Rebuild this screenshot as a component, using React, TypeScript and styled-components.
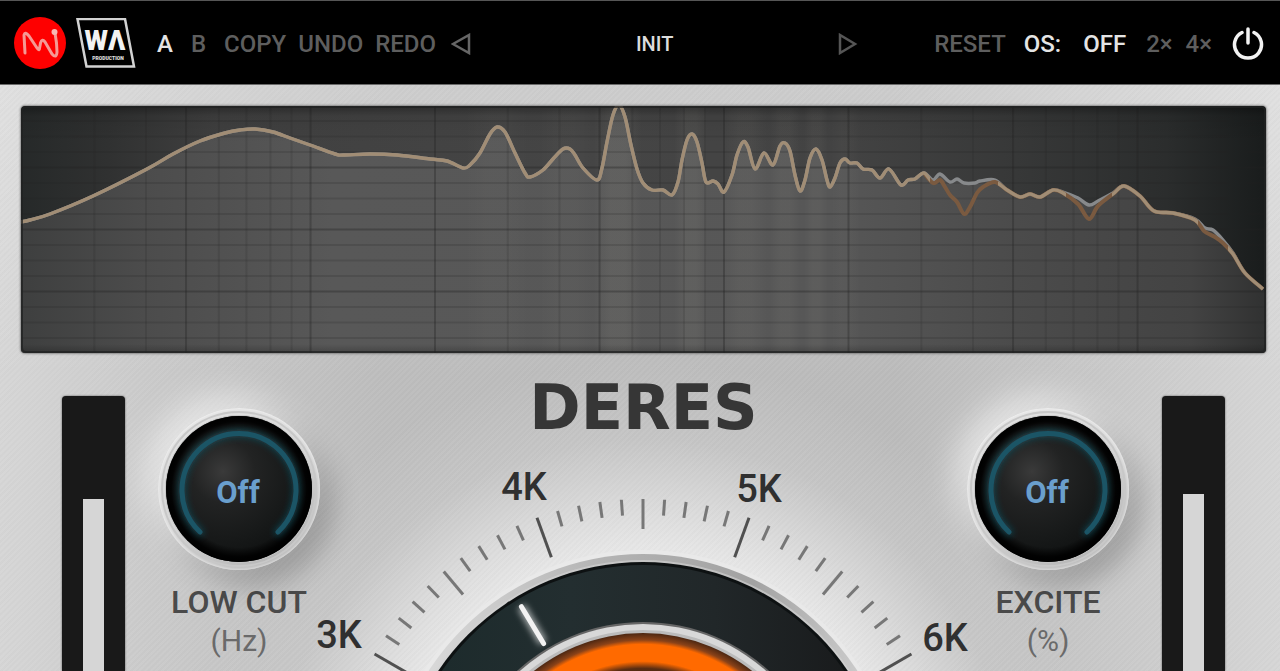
import React from "react";
import styled, { createGlobalStyle } from "styled-components";

const GlobalStyle = createGlobalStyle`
  * { box-sizing: border-box; }
  body { margin: 0; background: #c6c6c6; }
  button { font: inherit; border: 0; padding: 0; background: none; cursor: pointer; }
`;

const Plugin = styled.div`
  display: flex;
  flex-direction: column;
  height: 100vh;
  overflow: hidden;
  font-family: Roboto, "Liberation Sans", sans-serif;
  background:
    repeating-linear-gradient(135deg, rgba(255, 255, 255, 0.03) 0 2px, rgba(0, 0, 0, 0.01) 2px 4px),
    radial-gradient(circle at calc(50% + 3px) 809px, #e6e6e6 0 262px, rgba(218, 218, 218, 0.95) 310px, rgba(203, 203, 203, 0.6) 370px, rgba(190, 190, 190, 0) 450px),
    linear-gradient(to bottom, rgba(255, 255, 255, 0.25) 85px, rgba(255, 255, 255, 0) 380px),
    linear-gradient(to right, #d6d6d6 0%, #cacaca 12%, #bdbdbd 30%, #bbbbbb 70%, #cacaca 88%, #d6d6d6 100%);
`;

const Header = styled.header`
  display: flex;
  align-items: center;
  flex: none;
  height: 85px;
  padding: 2px 16px 0 14px;
  background: #000;
  border-top: 1px solid #565656;
  border-bottom: 1px solid #6a6a6a;
  font-size: 24px;
  line-height: 28px;
`;

const Brand = styled.div`
  display: flex;
  align-items: center;
  gap: 10px;
  margin-right: 21px;
  svg { display: block; }
`;

const Group = styled.div<{ $gap: number; $after: number }>`
  display: flex;
  align-items: center;
  gap: ${(p) => p.$gap}px;
  margin-right: ${(p) => p.$after}px;
`;

const BarButton = styled.button<{ $active?: boolean }>`
  color: ${(p) => (p.$active ? "#e4e4e4" : "#5e5e5e")};
  font-weight: 500;
`;

const BarText = styled.span`
  color: #e4e4e4;
  font-weight: 500;
`;

const PresetNav = styled.nav`
  display: flex;
  flex: 1;
  align-items: center;
  justify-content: space-between;
  margin-right: 76px;
`;

const PresetName = styled.button`
  color: #dcdcdc;
  font-size: 20px;
  font-weight: 500;
`;

const IconButton = styled.button`
  display: block;
  svg { display: block; }
`;

const Display = styled.section`
  flex: none;
  margin: 21px 14px 0 21px;
  border-radius: 4px;
  overflow: hidden;
  box-shadow: 0 0 2px 1px rgba(90, 90, 90, 0.6);
  svg { display: block; width: 100%; height: auto; }
`;

const Controls = styled.main`
  display: flex;
  flex: 1;
  align-items: stretch;
  gap: 33px;
  min-height: 0;
  padding: 1px 55px 0 62px;
`;

const MeterTrack = styled.div<{ $top: number }>`
  flex: none;
  display: flex;
  justify-content: center;
  width: 63px;
  margin-top: 42px;
  padding-top: ${(p) => p.$top}px;
  background: #191919;
  border-radius: 4px 4px 0 0;
  box-shadow: 0 0 2px rgba(40, 40, 40, 0.8);
  position: relative;
  z-index: 1;
`;

const MeterLevel = styled.div`
  width: 21px;
  background: #d6d6d6;
`;

const KnobColumn = styled.div`
  flex: none;
  display: flex;
  flex-direction: column;
  align-items: center;
  width: 162px;
  padding-top: 54px;
`;

const KnobBody = styled.div`
  position: relative;
  flex: none;
  width: 162px;
  height: 162px;
  border-radius: 50%;
  background: linear-gradient(150deg, #e2e2e2 10%, #d6d6d6 50%, #b4b4b4 90%);
  box-shadow:
    -12px -12px 34px rgba(245, 245, 245, 0.7),
    12px 14px 28px rgba(0, 0, 0, 0.24),
    inset 0 0 4px rgba(255, 255, 255, 0.9);
  svg { display: block; }
`;

const KnobInput = styled.input`
  position: absolute;
  inset: 0;
  width: 100%;
  height: 100%;
  margin: 0;
  opacity: 0;
  cursor: grab;
`;

const KnobLabel = styled.label`
  margin-top: 12px;
  font-size: 32px;
  line-height: 40px;
  font-weight: 500;
  color: #4a4a4a;
  white-space: nowrap;
`;

const KnobUnit = styled.span`
  font-size: 30px;
  line-height: 38px;
  color: #6a6a6a;
`;

const Center = styled.div`
  flex: 1;
  min-width: 0;
  display: flex;
  flex-direction: column;
  align-items: center;
  svg { display: block; flex: none; width: 100%; height: auto; overflow: visible; }
`;

const Title = styled.h1`
  margin: 18px 0 0;
  height: 68px;
  font-family: "DejaVu Sans", sans-serif;
  font-size: 62px;
  line-height: 72px;
  font-weight: 700;
  color: #363636;
`;

type Point = [number, number];

const head: Point[] = [
  [20, 222], [30, 220], [50, 214], [93, 196], [147, 169], [173, 154], [200, 141], [225, 133], [240, 130],
  [255, 129], [273, 132], [290, 138], [310, 145], [335, 154], [343, 155], [370, 154], [397, 155], [430, 159],
  [447, 161], [463, 168], [470, 165], [480, 153], [490, 134], [497, 127], [505, 132], [515, 153], [525, 173],
  [530, 177], [543, 170], [553, 159], [563, 149], [570, 149], [575, 155], [583, 168], [597, 180], [602, 168],
  [607, 142], [613, 115], [619, 105], [625, 117], [631, 145], [637, 169], [643, 183], [652, 190], [663, 190],
  [672, 195], [678, 182], [682, 160], [687, 140], [692, 134], [697, 142], [702, 163], [706, 182], [713, 181],
  [718, 184], [724, 192], [732, 175], [737, 155], [743, 142], [748, 147], [755, 169], [764, 153], [773, 165],
  [780, 146], [785, 143], [790, 151], [795, 175], [800, 191], [805, 180], [810, 158], [816, 149], [822, 160],
  [827, 180], [830, 187], [835, 178], [840, 163], [845, 159], [850, 163], [857, 163], [863, 169], [872, 170],
  [880, 178], [889, 169], [901, 185], [908, 180], [915, 179], [924, 173],
];

const inputTail: Point[] = [
  [933, 180], [940, 174], [950, 182], [957, 179], [964, 183], [975, 183], [980, 181], [995, 180], [1007, 190],
  [1020, 197], [1030, 194], [1040, 197], [1053, 190], [1063, 192], [1078, 198], [1089, 205], [1098, 201],
  [1113, 193], [1124, 186], [1140, 196], [1154, 211], [1173, 213], [1195, 219], [1205, 228], [1213, 230],
  [1223, 240], [1233, 253], [1245, 273], [1263, 289],
];

const outputTail: Point[] = [
  [933, 183], [940, 180], [945, 187], [950, 195], [957, 202], [964, 214], [970, 207], [977, 193], [983, 187],
  [995, 182], [1007, 190], [1020, 197], [1030, 194], [1040, 197], [1053, 190], [1063, 193], [1078, 204],
  [1089, 219], [1098, 206], [1113, 194], [1124, 186], [1140, 196], [1154, 211], [1173, 213], [1195, 220],
  [1204, 231], [1215, 237], [1223, 243], [1233, 254], [1245, 273], [1263, 289],
];

// Catmull-Rom spline through the measured magnitudes.
function smooth(points: Point[]): string {
  let d = `M${points[0][0]} ${points[0][1]}`;
  for (let i = 0; i < points.length - 1; i++) {
    const a = points[Math.max(0, i - 1)];
    const b = points[i];
    const c = points[i + 1];
    const e = points[Math.min(points.length - 1, i + 2)];
    d += `C${b[0] + (c[0] - a[0]) / 6} ${b[1] + (c[1] - a[1]) / 6} ${c[0] - (e[0] - b[0]) / 6} ${c[1] - (e[1] - b[1]) / 6} ${c[0]} ${c[1]}`;
  }
  return d;
}

const inputPath = smooth([...head, ...inputTail]);
const outputPath = smooth([...head, ...outputTail]);
const areaPath = `${inputPath}L1266 292V354H20Z`;

// 20 Hz sits on the left edge; one decade is 413.5 units wide.
const frequencies = [30, 40, 50, 60, 70, 80, 90, 100, 200, 300, 400, 500, 600, 700, 800, 900, 1000, 2000, 3000, 4000, 5000, 6000, 7000, 8000, 9000, 10000];
const strongFrequencies = [50, 100, 200, 500, 1000, 2000, 5000, 10000];
const frequencyX = (f: number) => 21.5 + 413.5 * Math.log10(f / 20);

// Peaks light up the columns beneath them: [centre, width, opacity].
const streaks = [
  [497, 64, 0.02], [566, 54, 0.02], [618, 48, 0.055], [691, 34, 0.05], [745, 44, 0.035],
  [785, 30, 0.035], [816, 24, 0.035], [846, 30, 0.02],
];

function Analyzer() {
  return (
    <Display aria-label="Spectrum">
      <svg viewBox="21 106 1245 247" role="img" aria-label="Spectrum analyzer">
        <defs>
          <linearGradient id="screen" x1="0" x2="1" y1="0" y2="0">
            <stop offset="0" stopColor="#262929" />
            <stop offset="0.07" stopColor="#303131" />
            <stop offset="0.16" stopColor="#404040" />
            <stop offset="0.45" stopColor="#454545" />
            <stop offset="0.66" stopColor="#434343" />
            <stop offset="0.8" stopColor="#373838" />
            <stop offset="0.92" stopColor="#2b2d2d" />
            <stop offset="1" stopColor="#191c1c" />
          </linearGradient>
          <linearGradient id="area" x1="0" x2="1" y1="0" y2="0">
            <stop offset="0" stopColor="#3e3f3f" />
            <stop offset="0.1" stopColor="#4c4c4c" />
            <stop offset="0.25" stopColor="#585858" />
            <stop offset="0.65" stopColor="#575757" />
            <stop offset="0.8" stopColor="#4b4b4b" />
            <stop offset="0.94" stopColor="#434343" />
            <stop offset="1" stopColor="#303131" />
          </linearGradient>
          <linearGradient id="streak" x1="0" x2="1" y1="0" y2="0">
            <stop offset="0" stopColor="#fff6e0" stopOpacity="0" />
            <stop offset="0.35" stopColor="#fff6e0" />
            <stop offset="0.65" stopColor="#fff6e0" />
            <stop offset="1" stopColor="#fff6e0" stopOpacity="0" />
          </linearGradient>
          <linearGradient id="vignette" x1="0" x2="0" y1="0" y2="1">
            <stop offset="0" stopColor="#000" stopOpacity="0.35" />
            <stop offset="0.04" stopColor="#000" stopOpacity="0.08" />
            <stop offset="0.15" stopColor="#000" stopOpacity="0" />
            <stop offset="0.96" stopColor="#000" stopOpacity="0" />
            <stop offset="1" stopColor="#000" stopOpacity="0.25" />
          </linearGradient>
          <clipPath id="shared">
            <rect x="20" y="100" width="910" height="260" />
            <rect x="998" y="100" width="68" height="260" />
            <rect x="1112" y="100" width="86" height="260" />
            <rect x="1228" y="100" width="40" height="260" />
          </clipPath>
        </defs>
        <rect x="21" y="106" width="1245" height="248" fill="url(#screen)" />
        <path d={areaPath} fill="url(#area)" />
        {streaks.map(([x, w, o]) => (
          <rect key={x} x={x - w / 2} y="106" width={w} height="248" fill="url(#streak)" opacity={o} />
        ))}
        {frequencies.map((f) => (
          <line key={f} x1={frequencyX(f)} x2={frequencyX(f)} y1="106" y2="354" stroke="#222" strokeWidth="2" opacity={strongFrequencies.includes(f) ? 0.32 : 0.15} />
        ))}
        {Array.from({ length: 15 }, (_, i) => (
          <line key={i} x1="21" x2="1266" y1={121 + i * 15.5} y2={121 + i * 15.5} stroke="#222" strokeWidth="2" opacity={i % 4 === 3 ? 0.34 : 0.17} />
        ))}
        <rect x="21" y="106" width="1245" height="248" fill="url(#vignette)" />
        <path d={inputPath} fill="none" stroke="#87898b" strokeWidth="3.400" strokeLinejoin="round" />
        <path d={smooth([head[head.length - 1], ...outputTail])} fill="none" stroke="#7a5a40" strokeWidth="4" strokeLinejoin="round" />
        <path d={outputPath} fill="none" stroke="#a18d75" strokeWidth="3.400" strokeLinejoin="round" clipPath="url(#shared)" />
        <rect x="22" y="107" width="1243" height="245" rx="4" fill="none" stroke="#202222" strokeWidth="2" opacity="0.75" />
      </svg>
    </Display>
  );
}

function Meter({ label, top, value }: { label: string; top: number; value: number }) {
  return (
    <MeterTrack $top={top} role="meter" aria-label={label} aria-valuenow={value} aria-valuemin={0} aria-valuemax={100}>
      <MeterLevel />
    </MeterTrack>
  );
}

function Knob({ id, label, unit }: { id: string; label: string; unit: string }) {
  return (
    <KnobColumn>
      <KnobBody>
        <svg viewBox="-81 -81 162 162" width="162" height="162" aria-hidden="true">
          <defs>
            <radialGradient id={`${id}-face`} cx="0.39" cy="0.38" r="0.62">
              <stop offset="0" stopColor="#3a3a3a" />
              <stop offset="0.35" stopColor="#222323" />
              <stop offset="0.75" stopColor="#171919" />
              <stop offset="1" stopColor="#101212" />
            </radialGradient>
            <radialGradient id={`${id}-edge`}>
              <stop offset="0.8" stopColor="#000" stopOpacity="0" />
              <stop offset="0.93" stopColor="#000" stopOpacity="0.9" />
              <stop offset="1" stopColor="#000" />
            </radialGradient>
            <filter id={`${id}-halo`}>
              <feGaussianBlur stdDeviation="3" />
            </filter>
          </defs>
          <circle r="77" fill="none" stroke="#c8c8c8" strokeWidth="2" />
          <circle r="74" fill="#c4c4c4" />
          <circle r="73" fill={`url(#${id}-face)`} />
          <circle r="73" fill={`url(#${id}-edge)`} />
          <path d="M-39 43A57 57 0 1 1 39 43" fill="none" stroke="#1c6175" strokeOpacity="0.5" strokeWidth="8" strokeLinecap="round" filter={`url(#${id}-halo)`} />
          <path d="M-39 43A57 57 0 1 1 39 43" fill="none" stroke="#1b5566" strokeWidth="5" strokeLinecap="round" />
          <text x="-1" y="14" textAnchor="middle" fontSize="31" fontWeight="700" fill="#6a9fcd">Off</text>
        </svg>
        <KnobInput id={id} type="range" min={0} max={100} defaultValue={0} />
      </KnobBody>
      <KnobLabel htmlFor={id}>{label}</KnobLabel>
      <KnobUnit>{unit}</KnobUnit>
    </KnobColumn>
  );
}

function Dial() {
  const ticks = Array.from({ length: 33 }, (_, i) => (i - 16) * 4);
  const length = (a: number) => (Math.abs(a) % 40 === 20 ? 42 : a % 20 === 0 ? 30 : 16);
  return (
    <svg viewBox="-290 -369 581 231" role="img" aria-label="Frequency">
      <defs>
        <linearGradient id="ring" gradientUnits="userSpaceOnUse" x1="-240" x2="240" y1="0" y2="0">
          <stop offset="0" stopColor="#1b2a2b" />
          <stop offset="0.35" stopColor="#232e30" />
          <stop offset="0.65" stopColor="#212729" />
          <stop offset="1" stopColor="#171819" />
        </linearGradient>
        <linearGradient id="bevel" gradientUnits="userSpaceOnUse" x1="-220" x2="220" y1="-200" y2="-200">
          <stop offset="0" stopColor="#dadada" />
          <stop offset="0.4" stopColor="#b4b4b4" />
          <stop offset="0.75" stopColor="#a2a2a2" />
          <stop offset="1" stopColor="#cccccc" />
        </linearGradient>
        <radialGradient id="glow" gradientUnits="userSpaceOnUse" cx="0" cy="0" r="178">
          <stop offset="0.7" stopColor="#2a1608" />
          <stop offset="0.79" stopColor="#5a2d12" />
          <stop offset="0.83" stopColor="#ff6a00" />
          <stop offset="0.925" stopColor="#ff6a00" />
          <stop offset="0.95" stopColor="#8a4218" />
          <stop offset="1" stopColor="#3a1f10" />
        </radialGradient>
        <filter id="bloom" filterUnits="userSpaceOnUse" x="-30" y="-265" width="60" height="100">
          <feGaussianBlur stdDeviation="3" />
        </filter>
      </defs>
      {ticks.map((a) => (
        <line key={a} x1="0" x2="0" y1="-310" y2={-310 + length(a)} transform={`rotate(${a})`} stroke={length(a) === 42 ? "#505050" : "#777"} strokeWidth="3" />
      ))}
      <circle r="259" fill="#e9e9e9" />
      <circle r="255" fill="url(#bevel)" />
      <circle r="249" fill="#d4d4d4" opacity="0.6" />
      <circle r="247" fill="#0d1112" />
      <circle r="244" fill="url(#ring)" />
      <circle r="187" fill="#666" />
      <circle r="185" fill="#d8d8d8" />
      <circle r="179" fill="#bbb" />
      <circle r="176" fill="url(#glow)" />
      <g transform="rotate(-31)">
        <line x1="0" x2="0" y1="-236" y2="-194" stroke="#fff" strokeWidth="9" opacity="0.6" filter="url(#bloom)" />
        <line x1="0" x2="0" y1="-236" y2="-193" stroke="#f2f2f2" strokeWidth="5" strokeLinecap="round" />
      </g>
      <g fontSize="38" fontWeight="500" fill="#303030" textAnchor="middle">
        <text x="-304" y="-161">3K</text>
        <text x="-119" y="-309">4K</text>
        <text x="116" y="-307">5K</text>
        <text x="302" y="-158">6K</text>
      </g>
    </svg>
  );
}

export default function App() {
  return (
    <Plugin>
      <GlobalStyle />
      <Header>
        <Brand>
          <svg width="52" height="54" viewBox="14 17 52 54" role="img" aria-label="Host">
            <circle cx="40" cy="43" r="26" fill="#fe0000" />
            <path d="M25 53L24 35Q25 31 29 36L37 48Q39.500 52 39.800 47L40.500 43Q42 38 45 42L52 54Q56.500 59 57 52L56.500 43L55 33" fill="none" stroke="#f59a94" strokeWidth="3" strokeLinecap="round" strokeLinejoin="round" />
            <circle cx="54.500" cy="32" r="3" fill="#f8b8b4" />
          </svg>
          <svg width="60" height="52" viewBox="76 19 60 52" role="img" aria-label="WA Production">
            <path d="M77.500 20H125L134 67.500H86.500Z" fill="none" stroke="#d2d2d2" strokeWidth="2.500" />
            <text x="105" y="51" textAnchor="middle" fontFamily="Roboto, sans-serif" fontWeight="900" fontSize="27" fill="#f2f2f2">WΛ</text>
            <text x="108" y="61" textAnchor="middle" fontFamily="Roboto, sans-serif" fontWeight="900" fontSize="5" fill="#e0e0e0">PRODUCTION</text>
          </svg>
        </Brand>
        <Group $gap={18} $after={18}>
          <BarButton type="button" $active>A</BarButton>
          <BarButton type="button">B</BarButton>
        </Group>
        <Group $gap={12} $after={15}>
          <BarButton type="button">COPY</BarButton>
          <BarButton type="button">UNDO</BarButton>
          <BarButton type="button">REDO</BarButton>
        </Group>
        <PresetNav aria-label="Presets">
          <IconButton type="button" aria-label="Previous preset">
            <svg width="20" height="22" viewBox="0 0 20 22"><path d="M18 2V20L2 11Z" fill="none" stroke="#666" strokeWidth="2.500" /></svg>
          </IconButton>
          <PresetName type="button">INIT</PresetName>
          <IconButton type="button" aria-label="Next preset">
            <svg width="20" height="22" viewBox="0 0 20 22"><path d="M2 2V20L17 11Z" fill="none" stroke="#555" strokeWidth="2.500" /></svg>
          </IconButton>
        </PresetNav>
        <Group $gap={18} $after={22}>
          <BarButton type="button">RESET</BarButton>
          <BarText>OS:</BarText>
        </Group>
        <Group $gap={20} $after={13}>
          <BarButton type="button" $active>OFF</BarButton>
          <BarButton type="button">2×</BarButton>
        </Group>
        <Group $gap={20} $after={0}>
          <BarButton type="button">4×</BarButton>
          <IconButton type="button" aria-label="Power">
            <svg width="32" height="34" viewBox="0 0 32 34"><path d="M10 5.500A13.500 13.500 0 1 0 22 5.500M16 2V16" fill="none" stroke="#f2f2f2" strokeWidth="3.500" strokeLinecap="round" /></svg>
          </IconButton>
        </Group>
      </Header>
      <Analyzer />
      <Controls>
        <Meter label="Input level" top={103} value={72} />
        <Knob id="low-cut" label="LOW CUT" unit="(Hz)" />
        <Center>
          <Title>DERES</Title>
          <Dial />
        </Center>
        <Knob id="excite" label="EXCITE" unit="(%)" />
        <Meter label="Output level" top={98} value={74} />
      </Controls>
    </Plugin>
  );
}
